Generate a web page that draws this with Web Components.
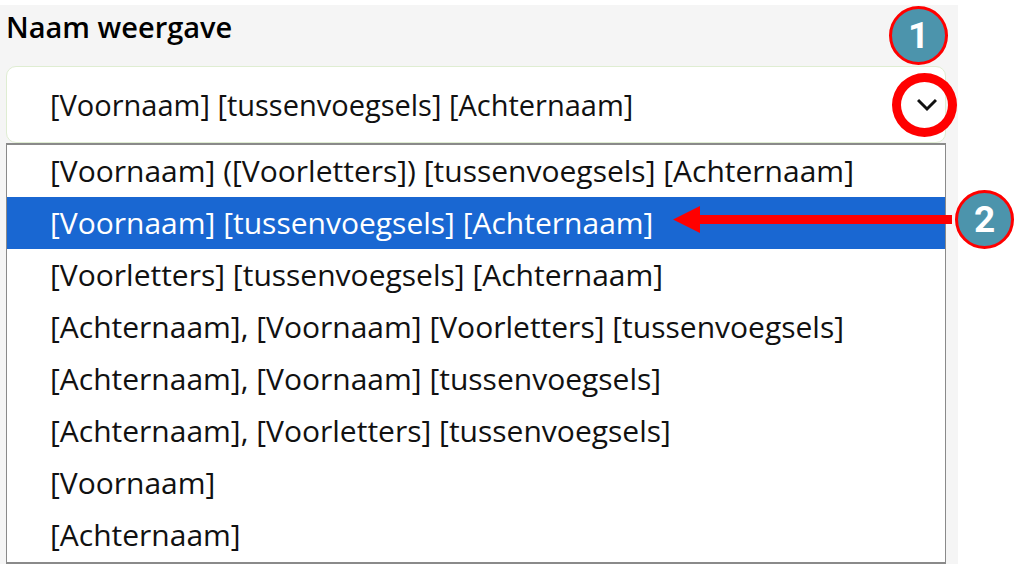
<!DOCTYPE html>
<html lang="nl">
<head>
<meta charset="utf-8">
<title>Naam weergave</title>
<style>
	body {
		margin: 0;
		background: #fff;
		color: #111;
		font-family: "Open Sans", "Noto Sans", sans-serif;
		overflow: hidden;
	}
</style>
</head>
<body>
<settings-panel>
	<name-field label="Naam weergave" value="[Voornaam] [tussenvoegsels] [Achternaam]">
		<step-badge slot="step">1</step-badge>
	</name-field>
	<option-list>
		<list-option>[Voornaam] ([Voorletters]) [tussenvoegsels] [Achternaam]</list-option>
		<list-option selected>[Voornaam] [tussenvoegsels] [Achternaam]<step-arrow slot="step"><step-badge>2</step-badge></step-arrow></list-option>
		<list-option>[Voorletters] [tussenvoegsels] [Achternaam]</list-option>
		<list-option>[Achternaam], [Voornaam] [Voorletters] [tussenvoegsels]</list-option>
		<list-option>[Achternaam], [Voornaam] [tussenvoegsels]</list-option>
		<list-option>[Achternaam], [Voorletters] [tussenvoegsels]</list-option>
		<list-option>[Voornaam]</list-option>
		<list-option>[Achternaam]</list-option>
	</option-list>
</settings-panel>

<script>
class SettingsPanel extends HTMLElement {
	constructor() {
		super()
		this.root = this.attachShadow({ mode: 'open' })
		this.root.innerHTML = `
			<style>
			:host {
				display: block;
				box-sizing: border-box;
				min-height: calc(100vh - 5px);
				margin: 5px 70px 0 0;
				padding: 0 12px 0 6px;
				background: #f5f5f5;
			}
			</style>
			<slot></slot>
		`
	}
}

class NameField extends HTMLElement {
	constructor() {
		super()
		this.root = this.attachShadow({ mode: 'open' })
		const label = this.getAttribute('label')
		const value = this.getAttribute('value')

		this.root.innerHTML = `
			<style>
			:host {
				display: block;
			}
			label {
				display: block;
				padding: 2px 0 19px;
				font-size: 29px;
				font-weight: 600;
				line-height: 40px;
				color: #000;
			}
			.box {
				position: relative;
			}
			select {
				display: block;
				box-sizing: border-box;
				width: 100%;
				height: 77px;
				margin: 0;
				padding: 0 64px 0 43px;
				border: 1px solid #dfedd2;
				border-radius: 10px;
				background: #fff;
				color: inherit;
				font: inherit;
				font-size: 29px;
				appearance: none;
			}
			svg {
				position: absolute;
				right: 9px;
				top: 32px;
				pointer-events: none;
			}
			/* red ring round the chevron */
			.ring {
				position: absolute;
				right: -11px;
				top: 7px;
				box-sizing: border-box;
				width: 65px;
				height: 64px;
				border: 9px solid #f00;
				border-radius: 50%;
				pointer-events: none;
			}
			::slotted(step-badge) {
				position: absolute;
				right: -2px;
				top: -60px;
			}
			</style>

			<label for="format">${label}</label>
			<div class="box">
				<select id="format"><option>${value}</option></select>
				<svg width="20" height="14" viewBox="0 0 20 14" fill="none" stroke="#111" stroke-width="3" aria-hidden="true">
					<path d="M1 2L10 11L19 2"/>
				</svg>
				<span class="ring"></span>
				<slot name="step"></slot>
			</div>
		`
	}
}

class OptionList extends HTMLElement {
	constructor() {
		super()
		this.root = this.attachShadow({ mode: 'open' })
		this.root.innerHTML = `
			<style>
			:host {
				display: flex;
				flex-direction: column;
				padding-bottom: 1px;
				border: 2px solid #8a8a8a;
				border-width: 2px 1px;
				background: #fff;
			}
			</style>
			<slot></slot>
		`
		this.setAttribute('role', 'listbox')
		this.setAttribute('aria-label', 'Naam weergave')
	}
}

class ListOption extends HTMLElement {
	constructor() {
		super()
		this.root = this.attachShadow({ mode: 'open' })
		this.root.innerHTML = `
			<style>
			:host {
				display: block;
				position: relative;
			}
			button {
				display: block;
				width: 100%;
				margin: 0;
				padding: 0 0 0 43px;
				border: 0;
				background: none;
				color: inherit;
				font: inherit;
				font-size: 30px;
				line-height: 52px;
				text-align: left;
				white-space: nowrap;
			}
			:host([selected]) button {
				background: #1967d2;
				color: #fff;
			}
			</style>
			<button type="button" role="option" aria-selected="${this.hasAttribute('selected')}"><slot></slot></button>
			<slot name="step"></slot>
		`
	}
}

class StepArrow extends HTMLElement {
	constructor() {
		super()
		this.root = this.attachShadow({ mode: 'open' })
		this.root.innerHTML = `
			<style>
			:host {
				position: absolute;
				right: -69px;
				top: -7px;
				display: flex;
				align-items: center;
				gap: 3px;
			}
			</style>
			<svg width="279" height="27" viewBox="0 0 279 27" fill="#f00" aria-hidden="true">
				<path d="M0 13.5L27 0V9H279V18H27V27Z"/>
			</svg>
			<slot></slot>
		`
	}
}

class StepBadge extends HTMLElement {
	constructor() {
		super()
		this.root = this.attachShadow({ mode: 'open' })
		this.root.innerHTML = `
			<style>
			:host {
				display: flex;
				align-items: center;
				justify-content: center;
				box-sizing: border-box;
				width: 59px;
				height: 59px;
				border: 3px solid #f00;
				border-radius: 50%;
				background: #4c94ac;
				color: #fff;
				font: 700 37px/1 Roboto, sans-serif;
			}
			</style>
			<slot></slot>
		`
	}
}

customElements.define('settings-panel', SettingsPanel)
customElements.define('name-field', NameField)
customElements.define('option-list', OptionList)
customElements.define('list-option', ListOption)
customElements.define('step-arrow', StepArrow)
customElements.define('step-badge', StepBadge)
</script>
</body>
</html>
